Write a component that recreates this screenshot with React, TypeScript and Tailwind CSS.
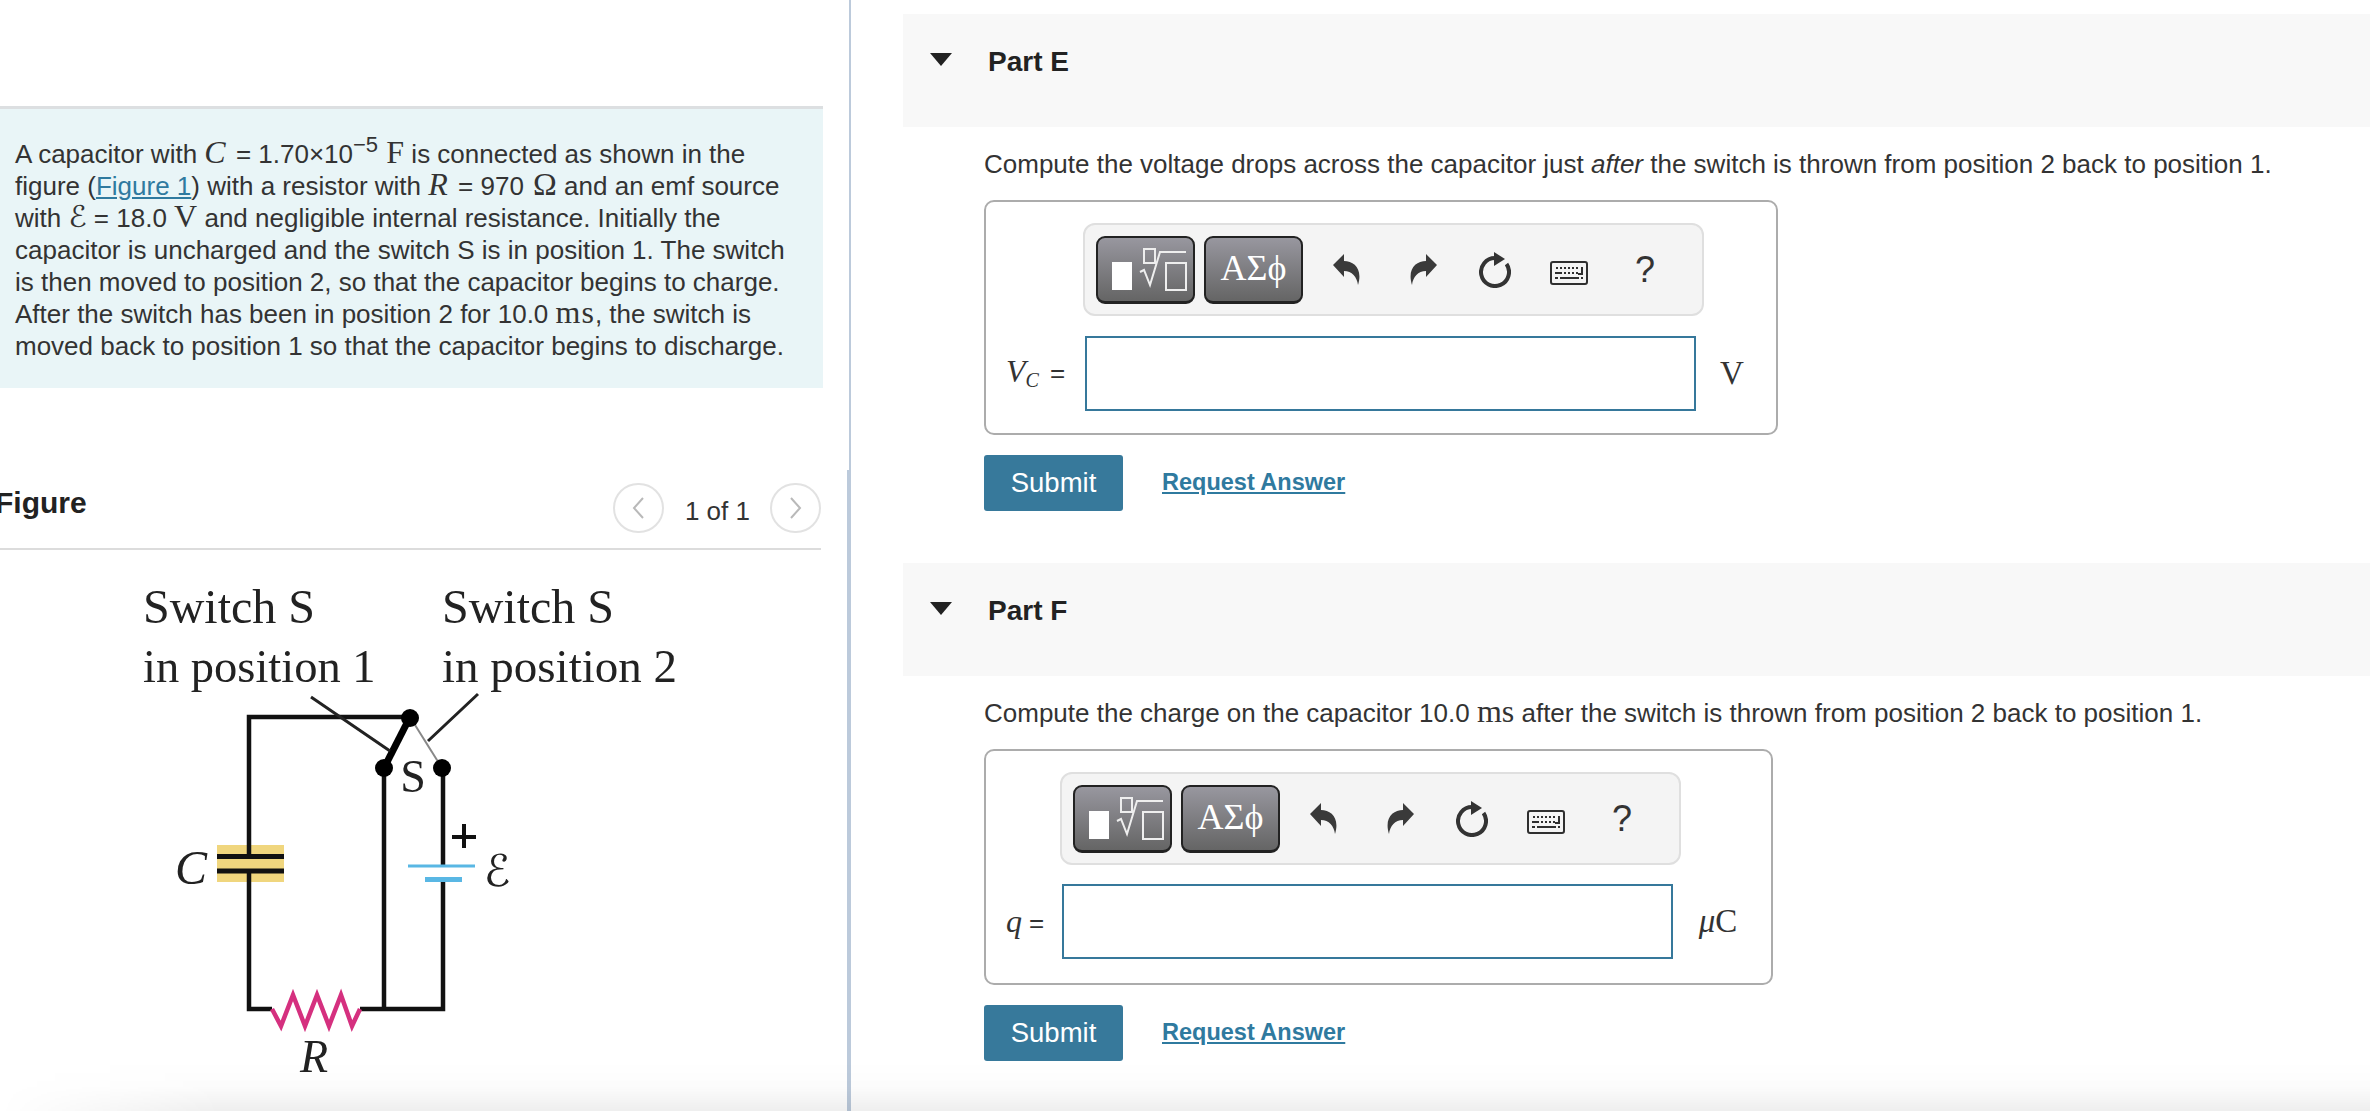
const sans = "font-['Liberation_Sans',Arial,sans-serif]";

function UndoIcon({ flip }: { flip?: boolean }) {
  return (
    <svg width="27" height="31" viewBox="0 0 27 31" className={flip ? '-scale-x-100' : ''}>
      <path d="M0 11 L11 0 V7 C21 7 30 15 25 31 C24 23 19 17 11 17 V23 Z" fill="#3a3a3a" />
    </svg>
  );
}

function RefreshIcon() {
  return (
    <svg width="32" height="36" viewBox="0 0 32 36">
      <path d="M16 6 A14 14 0 1 0 27.5 12" fill="none" stroke="#333" strokeWidth="4" />
      <path d="M15 0 L26 7 L15 14 Z" fill="#333" />
    </svg>
  );
}

function KeyboardIcon() {
  return (
    <svg width="38" height="24" viewBox="0 0 38 24">
      <rect x="1" y="1" width="36" height="22" rx="2" fill="#f4f4f4" stroke="#2f2f2f" strokeWidth="2" />
      {[6, 10, 14, 18, 22, 26].map((x) => (
        <rect key={x} x={x} y="6" width="2" height="2" fill="#2f2f2f" />
      ))}
      <rect x="5" y="11" width="7" height="2" fill="#2f2f2f" />
      {[14, 18, 22, 26].map((x) => (
        <rect key={x} x={x} y="11" width="2" height="2" fill="#2f2f2f" />
      ))}
      <path d="M32 6 V13 H28" fill="none" stroke="#2f2f2f" strokeWidth="2" />
      <rect x="5" y="16" width="3" height="2" fill="#2f2f2f" />
      <rect x="10" y="16" width="19" height="2" fill="#2f2f2f" />
      <rect x="31" y="16" width="2" height="2" fill="#2f2f2f" />
    </svg>
  );
}

function Toolbar({ className }: { className: string }) {
  const btn = 'flex h-[68px] w-[99px] items-center justify-center rounded-[9px] border-2 border-b-[3px] border-[#222] bg-gradient-to-b from-[#98979f] to-[#656565]';
  return (
    <div className={`flex h-[93px] w-[621px] items-center rounded-[12px] border-2 border-[#dfdfdf] bg-[#f4f4f4] pl-[11px] ${className}`}>
      <div className={btn}>
        <svg width="95" height="63" viewBox="2 2 95 63">
          <rect x="16" y="26" width="20" height="28" fill="#fff" />
          <path d="M44 36 L48 34 L54 49 L64 16 H90" fill="none" stroke="#eee" strokeWidth="2" />
          <rect x="48" y="13" width="11" height="14" fill="none" stroke="#eee" strokeWidth="2" />
          <rect x="70" y="27" width="20" height="27" fill="none" stroke="#eee" strokeWidth="2" />
        </svg>
      </div>
      <div className={`${btn} ml-[9px] pb-[2px] font-['Liberation_Serif',serif] text-[36px] leading-none text-white`}>
        ΑΣϕ
      </div>
      <div className="ml-[30px]"><UndoIcon /></div>
      <div className="ml-[50px]"><UndoIcon flip /></div>
      <div className="ml-[42px]"><RefreshIcon /></div>
      <div className="ml-[39px] mt-[6px]"><KeyboardIcon /></div>
      <div className={`ml-[47px] text-[36px] leading-none text-[#333] ${sans}`}>?</div>
    </div>
  );
}

function Part(props: {
  name: string;
  question: React.ReactNode;
  toolbarClass: string;
  labelClass: string;
  label: React.ReactNode;
  unit: React.ReactNode;
  boxClass: string;
}) {
  return (
    <section>
      <div className="flex h-[113px] items-start bg-[#f8f8f8] pt-[34px] pl-[27px]">
        <div className="mt-[5px] h-0 w-0 border-x-[11px] border-t-[13px] border-x-transparent border-t-[#222]" />
        <h2 className="ml-[36px] text-[28px] leading-[28px] font-bold text-[#222]">{props.name}</h2>
      </div>
      <div className="pl-[81px]">
        <p className="mt-[22px] h-[30px] text-[26px] leading-[30px] text-[#333]">{props.question}</p>
        <div className={`mt-[21px] rounded-[10px] border-2 border-[#acacac] pt-[21px] ${props.boxClass}`}>
          <Toolbar className={props.toolbarClass} />
          <div className="flex h-[75px] items-center">
            <div className={`shrink-0 pl-[20px] font-['Liberation_Serif',serif] text-[32px] leading-none text-[#333] ${props.labelClass}`}>{props.label}</div>
            <div className="h-[75px] w-[611px] border-2 border-[#36789b] bg-white" />
            <div className="flex-1 pr-[8px] text-center font-['Liberation_Serif',serif] text-[33px] leading-none text-[#333]">{props.unit}</div>
          </div>
        </div>
        <div className="mt-[20px] flex items-center">
          <button className="h-[56px] w-[139px] rounded-[3px] bg-[#37799b] text-[27.5px] text-white">Submit</button>
          <a className="ml-[39px] text-[23.5px] font-bold text-[#2f7a9f] underline">Request Answer</a>
        </div>
      </div>
    </section>
  );
}

function Circuit() {
  return (
    <svg width="600" height="520" viewBox="100 570 600 520" className="mt-[22px] ml-[100px] blur-[0.5px]">
      <g fontFamily="'Liberation Serif', serif" fill="#222">
        <text x="143" y="621" fontSize="48">Switch S</text>
        <text x="143" y="680" fontSize="46.5">in position 1</text>
        <text x="442" y="621" fontSize="48">Switch S</text>
        <text x="442" y="680" fontSize="47">in position 2</text>
      </g>
      <rect x="217" y="843" width="67" height="37" fill="#f0d67e" />
      <path d="M410 715 H249 V854 M249 869 V1007 H272 M360 1007 H443 V877 M443 864 V766 M384 766 V1007" fill="none" stroke="#111" strokeWidth="4.5" />
      <path d="M217 854.5 H284 M217 869 H284" stroke="#111" strokeWidth="5" />
      <path d="M408 864 H475" stroke="#59b7e4" strokeWidth="3" />
      <path d="M425 877.5 H462" stroke="#59b7e4" strokeWidth="5" />
      <path d="M410 715 L384 766" stroke="#000" strokeWidth="7" />
      <path d="M410 715 L442 766" stroke="#888" strokeWidth="2" />
      <path d="M311 695 L390 749 M478 692 L428 739" stroke="#222" strokeWidth="3" fill="none" />
      <circle cx="410" cy="716" r="9" fill="#000" />
      <circle cx="384" cy="766" r="9" fill="#000" />
      <circle cx="442" cy="766" r="9" fill="#000" />
      <path d="M464 822 V846 M452 835 H476" stroke="#111" strokeWidth="4" />
      <path d="M272 1007 L281 1024 L293 993 L305 1024 L317 993 L329 1024 L341 993 L352 1024 L360 1007" fill="none" stroke="#d5307f" strokeWidth="4.5" />
      <g fontFamily="'Liberation Serif', serif" fill="#222">
        <text x="413" y="790" fontSize="46" textAnchor="middle">S</text>
        <text x="191" y="882" fontSize="48" fontStyle="italic" textAnchor="middle">C</text>
        <text x="497" y="884" fontSize="44" fontStyle="italic" fontFamily="'DejaVu Sans', sans-serif" textAnchor="middle">ℰ</text>
        <text x="314" y="1070" fontSize="46" fontStyle="italic" textAnchor="middle">R</text>
      </g>
    </svg>
  );
}

function Pager({ children }: { children: React.ReactNode }) {
  return (
    <div className="flex h-[50px] w-[51px] items-center justify-center rounded-full border-2 border-[#e2e2e2] bg-white">
      {children}
    </div>
  );
}

export default function App() {
  const math = "font-['Liberation_Serif',serif] text-[32px] leading-[0]";
  return (
    <div className={`relative flex h-[1111px] overflow-hidden bg-white ${sans}`}>
      {/* Left column */}
      <div className="flex w-[851px] shrink-0 flex-col">
        <div className="h-[470px] border-r-2 border-[#bccadb] pt-[106px]">
          <div className="h-[282px] w-[823px] border-t-[3px] border-[#dcdfe1] bg-[#e9f5f7] pt-[29px] pl-[15px] text-[26px] leading-[32px] text-[#333]">
            A capacitor with <i className={math}>C</i> <span className="ml-[3px]">=</span> 1.70×10<sup className="text-[22px]">−5</sup> <span className={`${math} ml-[1px]`}>F</span> is connected as shown in the<br />
            figure (<a className="text-[#2f7a9f] underline">Figure 1</a>) with a resistor with <i className={math}>R</i> <span className="ml-[3px]">=</span> 970 <span className={`${math} ml-[2px]`}>Ω</span> and an emf source<br />
            with <i className="font-['DejaVu_Sans',sans-serif] text-[30px] leading-[0]">ℰ</i> = 18.0 <span className={math}>V</span> and negligible internal resistance. Initially the<br />
            capacitor is uncharged and the switch S is in position 1. The switch<br />
            is then moved to position 2, so that the capacitor begins to charge.<br />
            After the switch has been in position 2 for 10.0 <span className={`${math} tracking-[1px]`}>ms</span>, the switch is<br />
            moved back to position 1 so that the capacitor begins to discharge.
          </div>
        </div>
        <div className="flex-1 border-r-4 border-[#bccadb] pt-[10px]">
          <div className="flex h-[70px] w-[821px] items-start border-b-2 border-[#dcdcdc]">
            <h2 className="ml-[-5px] text-[30px] leading-[46px] font-bold text-[#222]">Figure</h2>
            <div className="mt-[3px] ml-auto flex items-center">
              <Pager>
                <svg width="14" height="24" viewBox="0 0 14 24"><path d="M12 2 L3 12 L12 22" fill="none" stroke="#b9b9b9" strokeWidth="2" /></svg>
              </Pager>
              <span className="mt-[6px] mr-[20px] ml-[21px] text-[26px] text-[#333]">1 of 1</span>
              <Pager>
                <svg width="14" height="24" viewBox="0 0 14 24"><path d="M2 2 L11 12 L2 22" fill="none" stroke="#b9b9b9" strokeWidth="2" /></svg>
              </Pager>
            </div>
          </div>
          <Circuit />
        </div>
      </div>

      {/* Right column */}
      <div className="flex min-w-0 flex-1 flex-col gap-[52px] pt-[14px] pl-[52px]">
        <Part
          name="Part E"
          question={<>Compute the voltage drops across the capacitor just <i>after</i> the switch is thrown from position 2 back to position 1.</>}
          boxClass="w-[794px] pb-[22px]"
          toolbarClass="mb-[20px] ml-[97px]"
          labelClass="w-[99px] pb-[5px]"
          label={<span><i>V<sub className="text-[20px]">C</sub></i><span className={`ml-[11px] text-[26px] ${sans}`}>=</span></span>}
          unit="V"
        />
        <Part
          name="Part F"
          question={<>Compute the charge on the capacitor 10.0 <span className={math}>ms</span> after the switch is thrown from position 2 back to position 1.</>}
          boxClass="w-[789px] pb-[24px]"
          toolbarClass="mb-[19px] ml-[74px]"
          labelClass="w-[76px] pb-[2px]"
          label={<span><i>q</i><span className={`ml-[7px] text-[26px] ${sans}`}>=</span></span>}
          unit={<><i>μ</i>C</>}
        />
      </div>

      {/* page-bottom fade */}
      <div className="pointer-events-none absolute inset-x-0 bottom-0 h-[50px] bg-gradient-to-b from-transparent via-black/[0.012] to-black/[0.065] [mask-image:linear-gradient(to_right,transparent,black_220px)]" />
    </div>
  );
}
